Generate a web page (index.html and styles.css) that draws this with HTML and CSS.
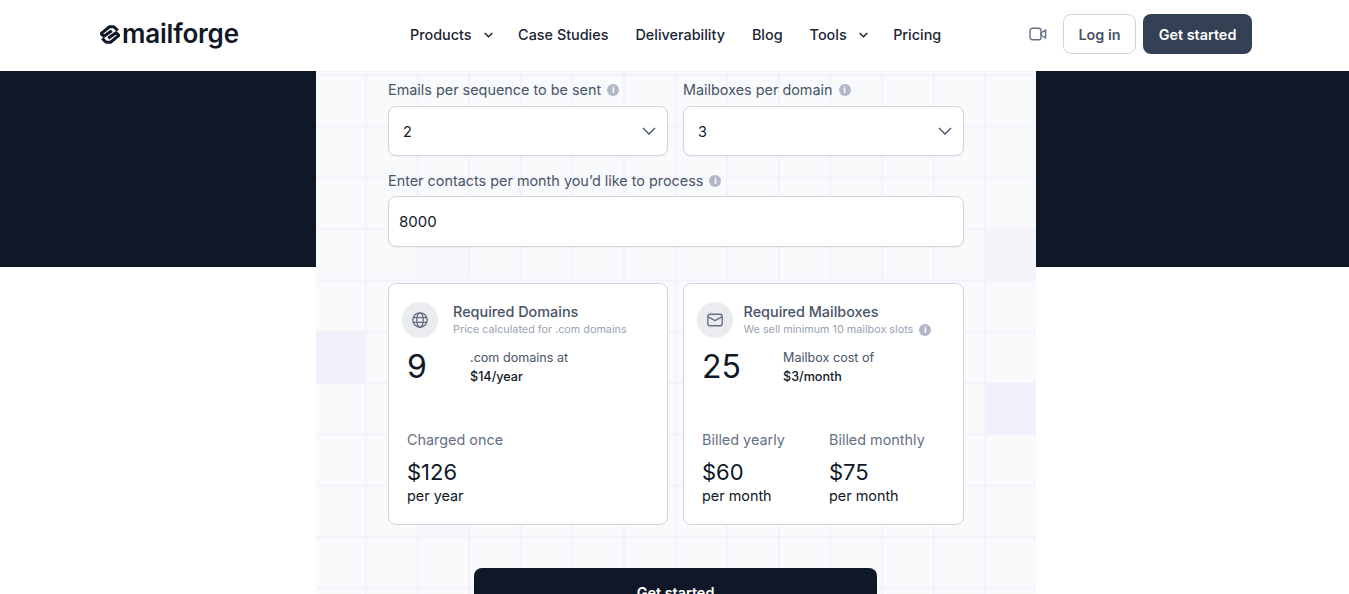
FILE: index.html
```html
<!doctype html>
<html>
	<head>
		<title>Mailforge cost calculator</title>
		<link rel="stylesheet" href="styles.css">
	</head>
	<body>
		<header class="topbar">
			<a class="logo" href="#">
				<svg class="logo-mark" viewBox="1 1.5 18 17" width="20" height="19" fill="none" stroke="#101828" stroke-width="2.7" stroke-linejoin="round">
					<path d="M17 6.5 13.5 3H9.5L2 9.2l2.6 2.4 7-5"/>
					<path d="M3 13.5 6.5 17h4L18 10.8l-2.6-2.4-7 5"/>
				</svg>
				<span>mailforge</span>
			</a>
			<nav class="nav">
				<a href="#">Products<svg class="caret" viewBox="0 0 9 6" width="9" height="6"><path d="M.7 1l3.8 3.8L8.3 1"/></svg></a>
				<a href="#">Case Studies</a>
				<a href="#">Deliverability</a>
				<a href="#">Blog</a>
				<a href="#">Tools<svg class="caret" viewBox="0 0 9 6" width="9" height="6"><path d="M.7 1l3.8 3.8L8.3 1"/></svg></a>
				<a href="#">Pricing</a>
			</nav>
			<div class="actions">
				<svg class="video" viewBox="0 0 18 14" width="18" height="14" fill="none" stroke="#667085" stroke-width="1.4" stroke-linejoin="round">
					<rect x="1" y="1.2" width="11" height="11.6" rx="2.4"/>
					<path d="M12 6l4.6-3v8L12 8z"/>
				</svg>
				<a class="btn btn-line" href="#">Log in</a>
				<a class="btn btn-dark" href="#">Get started</a>
			</div>
		</header>

		<main class="stage">
			<section class="panel">
				<div class="row">
					<div class="field">
						<label class="label">Emails per sequence to be sent<i class="info">i</i></label>
						<div class="select">
							<span>2</span>
							<svg viewBox="0 0 14 8" width="14" height="8"><path d="M1 1l6 6 6-6"/></svg>
						</div>
					</div>
					<div class="field">
						<label class="label">Mailboxes per domain<i class="info">i</i></label>
						<div class="select">
							<span>3</span>
							<svg viewBox="0 0 14 8" width="14" height="8"><path d="M1 1l6 6 6-6"/></svg>
						</div>
					</div>
				</div>
				<div class="field contacts">
					<label class="label">Enter contacts per month you’d like to process<i class="info">i</i></label>
					<input class="text-input" type="text" value="8000" spellcheck="false"/>
				</div>
				<div class="row cards">
					<div class="card">
						<div class="card-head gap-wide">
							<div class="circle">
								<svg viewBox="0 0 20 20" width="18" height="18" fill="none" stroke="#667085" stroke-width="1.5">
									<circle cx="10" cy="10" r="8"/>
									<ellipse cx="10" cy="10" rx="3.6" ry="8"/>
									<path d="M2.4 7.4h15.2M2.4 12.6h15.2"/>
								</svg>
							</div>
							<div>
								<div class="card-title">Required Domains</div>
								<div class="card-sub">Price calculated for .com domains</div>
							</div>
						</div>
						<div class="count-row">
							<div class="count count-short">9</div>
							<div class="count-note">
								<div>.com domains at</div>
								<strong>$14/year</strong>
							</div>
						</div>
						<div class="prices">
							<div class="price">
								<div class="price-label">Charged once</div>
								<div class="price-value">$126</div>
								<div class="price-unit">per year</div>
							</div>
						</div>
					</div>
					<div class="card">
						<div class="card-head">
							<div class="circle">
								<svg viewBox="0 0 20 20" width="18" height="18" fill="none" stroke="#667085" stroke-width="1.5" stroke-linejoin="round">
									<rect x="2" y="3.6" width="16" height="12.8" rx="2.6"/>
									<path d="M2.4 6.6 10 10.6l7.6-4"/>
								</svg>
							</div>
							<div>
								<div class="card-title">Required Mailboxes</div>
								<div class="card-sub">We sell minimum 10 mailbox slots<i class="info">i</i></div>
							</div>
						</div>
						<div class="count-row">
							<div class="count count-long">25</div>
							<div class="count-note">
								<div>Mailbox cost of</div>
								<strong>$3/month</strong>
							</div>
						</div>
						<div class="prices">
							<div class="price">
								<div class="price-label">Billed yearly</div>
								<div class="price-value">$60</div>
								<div class="price-unit">per month</div>
							</div>
							<div class="price">
								<div class="price-label">Billed monthly</div>
								<div class="price-value">$75</div>
								<div class="price-unit">per month</div>
							</div>
						</div>
					</div>
				</div>
				<a class="cta" href="#">Get started</a>
			</section>
		</main>
	</body>
</html>
```
FILE: styles.css
```css
html, body {
	height: 100%;
	margin: 0;
	overflow: hidden;
}
body {
	font-family: Inter, "Liberation Sans", sans-serif;
	color: #101828;
	background: #fff;
}
a {
	color: inherit;
	text-decoration: none;
}

/* top bar */
.topbar {
	display: flex;
	align-items: center;
	box-sizing: border-box;
	height: 71px;
	padding: 0 97px 3px 100px;
	background: #fff;
}
.logo {
	display: flex;
	align-items: center;
	gap: 2px;
	width: 310px;
	font-weight: 600;
	font-size: 26px;
	letter-spacing: -0.2px;
	color: #101828;
}
.logo span {
	padding-bottom: 2px;
}
.nav {
	display: flex;
	align-items: center;
	gap: 27px;
	font-size: 14.4px;
	font-weight: 500;
	color: #1d2433;
}
.nav a {
	display: flex;
	align-items: center;
}
.caret {
	margin: 2px -1.5px 0 12px;
	fill: none;
	stroke: #1d2433;
	stroke-width: 1.5;
}
.actions {
	display: flex;
	align-items: center;
	margin-left: auto;
}
.video {
	margin-right: 16px;
}
.btn {
	display: flex;
	align-items: center;
	justify-content: center;
	box-sizing: border-box;
	height: 40px;
	border-radius: 8px;
	font-size: 14.4px;
	font-weight: 600;
}
.btn-line {
	width: 73px;
	margin-right: 7px;
	border: 1px solid #d0d5dd;
	color: #475467;
}
.btn-dark {
	width: 109px;
	background: #344054;
	color: #fff;
}

/* dark band runs behind the panel */
.stage {
	display: flex;
	height: 523px;
	padding-left: 316px;
	background: linear-gradient(#101828 196px, #fff 196px);
}
.panel {
	box-sizing: border-box;
	width: 720px;
	padding: 9px 72px 0;
	border-top: 1px solid #eef0f5;
	background-color: #f9fafc;
	background-image:
		linear-gradient(#f2f0fb, #f2f0fb),
		linear-gradient(#f1effb, #f1effb),
		linear-gradient(#f5f4fa, #f5f4fa),
		linear-gradient(#f5f5fa, #f5f5fa),
		linear-gradient(#f5f5fa, #f5f5fa),
		linear-gradient(90deg, #f3f1fb 2px, transparent 2px),
		linear-gradient(#f3f1fb 2px, transparent 2px);
	background-size:
		50px 51px,
		50px 51px,
		50px 51px,
		51px 51px,
		51px 51px,
		51.6px 51.35px,
		51.6px 51.35px;
	background-position:
		0 259px,
		670px 311px,
		670px 157px,
		101px 157px,
		101px 414px,
		-2.6px 0,
		0 1.95px;
	background-repeat: no-repeat, no-repeat, no-repeat, no-repeat, no-repeat, repeat, repeat;
}

/* form */
.row {
	display: grid;
	grid-template-columns: 280px 281px;
	gap: 15px;
}
.label {
	display: flex;
	align-items: center;
	height: 17px;
	margin-bottom: 8px;
	font-size: 14.4px;
	color: #475467;
}
.info {
	display: inline-block;
	flex-shrink: 0;
	width: 12px;
	height: 12px;
	margin-left: 6px;
	border-radius: 50%;
	background: #b0b7c6;
	color: #fff;
	font-size: 9px;
	font-style: normal;
	font-weight: 700;
	line-height: 12px;
	text-align: center;
}
.select {
	display: flex;
	align-items: center;
	justify-content: space-between;
	box-sizing: border-box;
	height: 50px;
	padding: 0 11px 0 14px;
	border: 1px solid #d0d5dd;
	border-radius: 8px;
	background: #fff;
	font-size: 14.4px;
	box-shadow: 0 1px 2px rgba(16, 24, 40, 0.05);
}
.select svg {
	fill: none;
	stroke: #475467;
	stroke-width: 1.4;
}
.contacts {
	margin-top: 16px;
}
.contacts .label {
	margin-bottom: 7px;
}
.text-input {
	display: block;
	box-sizing: border-box;
	width: 100%;
	height: 51px;
	padding: 0 10px;
	border: 1px solid #d0d5dd;
	border-radius: 8px;
	background: #fff;
	color: #101828;
	font-family: inherit;
	font-size: 15px;
	box-shadow: 0 1px 2px rgba(16, 24, 40, 0.05);
}

/* cards */
.cards {
	margin-top: 36px;
}
.card {
	box-sizing: border-box;
	height: 242px;
	padding: 18px;
	border: 1px solid #d0d5dd;
	border-radius: 8px;
	background: #fff;
}
.card-head {
	display: flex;
	align-items: center;
	gap: 10.5px;
	margin-left: -5px;
}
.gap-wide {
	gap: 15px;
}
.circle {
	display: flex;
	align-items: center;
	justify-content: center;
	flex-shrink: 0;
	width: 36px;
	height: 36px;
	border-radius: 50%;
	background: #eaecf0;
}
.card-title {
	font-size: 14.4px;
	font-weight: 500;
	line-height: 18px;
	color: #475467;
}
.card-sub {
	display: flex;
	align-items: center;
	margin-top: 1px;
	font-size: 10.8px;
	line-height: 16px;
	color: #98a2b3;
}
.count-row {
	display: flex;
	margin-top: 8px;
}
.count {
	flex-shrink: 0;
	font-size: 32px;
	line-height: 42px;
}
.count-short {
	width: 63px;
}
.count-long {
	width: 81px;
}
.count-note {
	margin-top: 2px;
	font-size: 12.6px;
	line-height: 19px;
	color: #475467;
}
.count-note strong {
	font-weight: 500;
	color: #101828;
}
.prices {
	display: flex;
	margin-top: 42px;
}
.price {
	flex: 0 0 127px;
}
.price-label {
	font-size: 14.4px;
	line-height: 20px;
	color: #667085;
}
.price-value {
	margin-top: 7px;
	font-size: 22px;
	line-height: 30px;
}
.price-unit {
	font-size: 14.4px;
	line-height: 18px;
}

/* bottom button */
.cta {
	display: block;
	width: 403px;
	height: 50px;
	margin: 43px 0 0 86px;
	border-radius: 8px;
	background: #101828;
	color: #fff;
	font-size: 14.4px;
	font-weight: 600;
	line-height: 50px;
	text-align: center;
}
```
